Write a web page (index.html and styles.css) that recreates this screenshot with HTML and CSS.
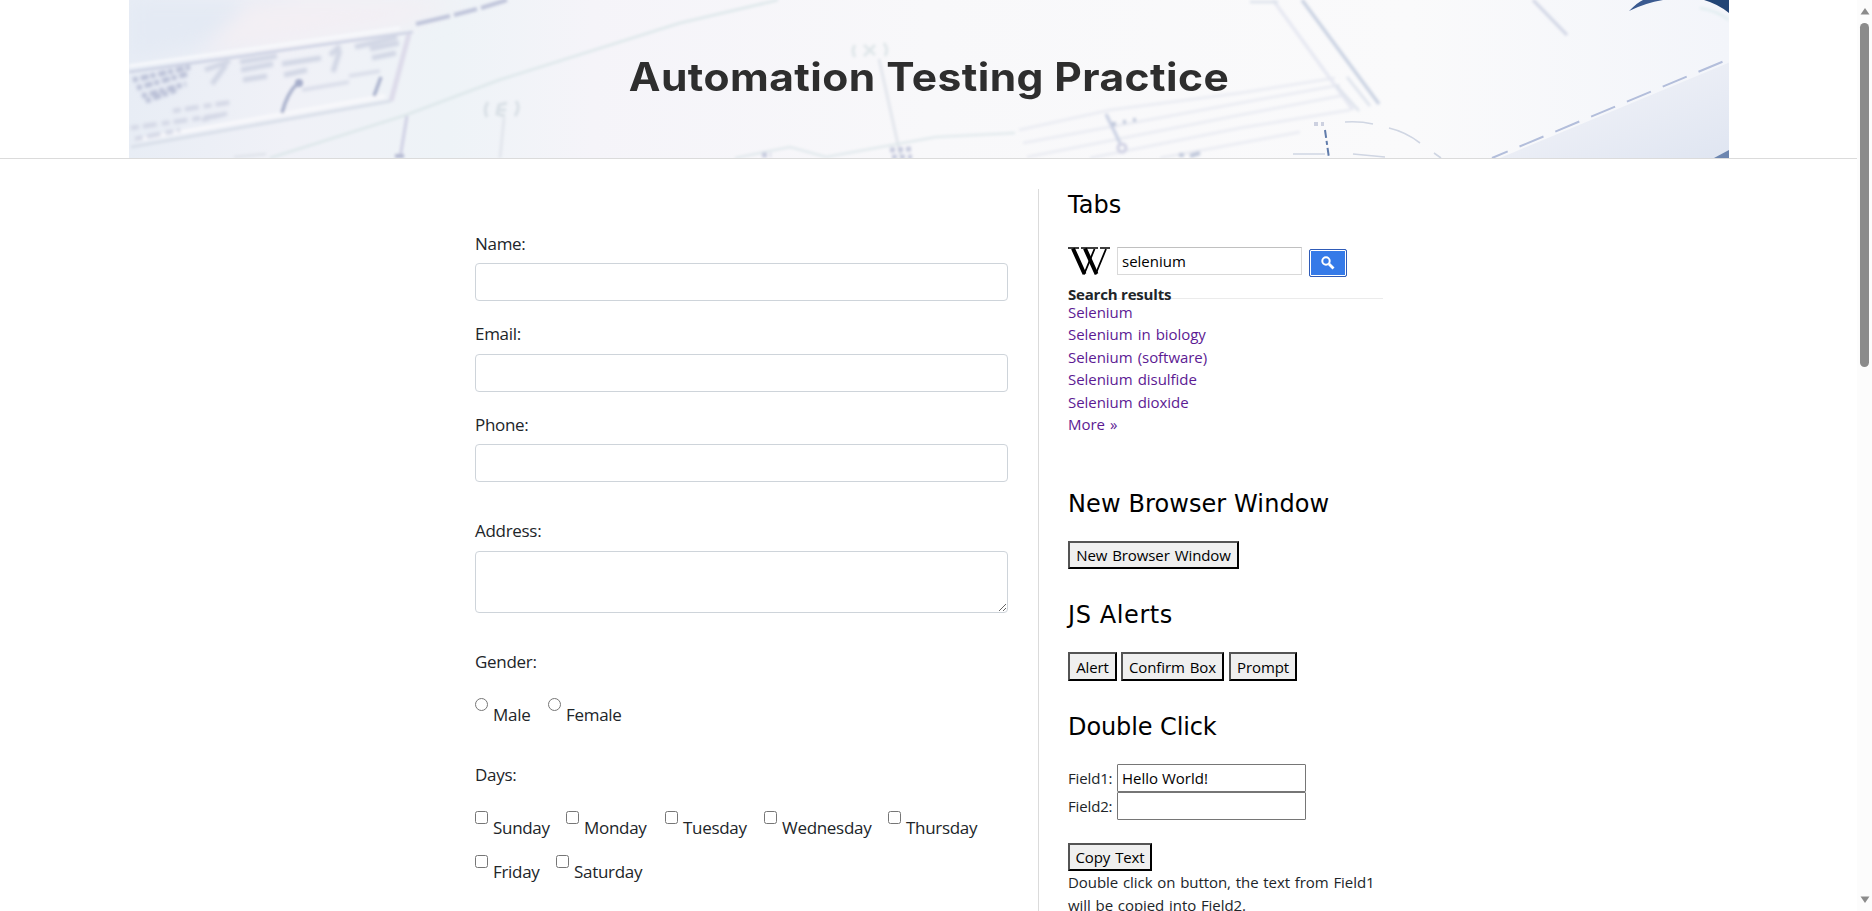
FILE: index.html
```
<!DOCTYPE html>
<html lang="en">
<head>
<meta charset="utf-8">
<title>Automation Testing Practice</title>
<link rel="stylesheet" href="styles.css">
</head>
<body>
<div class="page">
  <header class="header">
    <svg class="blueprint" viewBox="129 0 1600 158" aria-hidden="true">
      <defs>
        <linearGradient id="paper" x1="0" x2="1" y1="0" y2="0">
          <stop offset="0" stop-color="#e8edf5"/><stop offset=".1" stop-color="#f0f1f7"/>
          <stop offset=".2" stop-color="#eef3f7"/><stop offset=".29" stop-color="#f5f4f9"/>
          <stop offset=".5" stop-color="#f8f8fa"/><stop offset=".8" stop-color="#fafafb"/>
          <stop offset="1" stop-color="#f3f5fa"/>
        </linearGradient>
        <linearGradient id="shade" x1="0" x2="1" y1="0" y2="1">
          <stop offset="0" stop-color="#f6f6fa"/><stop offset="1" stop-color="#dfe5f1"/>
        </linearGradient>
        <filter id="soft" x="-5%" y="-20%" width="110%" height="140%"><feGaussianBlur stdDeviation="1.5"/></filter>
        <filter id="smudge" x="-5%" y="-20%" width="110%" height="140%"><feGaussianBlur stdDeviation="1.2"/></filter>
        <filter id="wide" x="-20%" y="-50%" width="140%" height="200%"><feGaussianBlur stdDeviation="10"/></filter>
        <filter id="fine" x="-5%" y="-20%" width="110%" height="140%"><feGaussianBlur stdDeviation=".5"/></filter>
      </defs>
      <rect x="129" width="1600" height="158" fill="url(#paper)"/>
      <path d="M129 0H300L240 40 129 60z" fill="#e4eaf4" filter="url(#wide)"/>
      <path d="M250 0H470L400 26 200 55z" fill="#f3eff4" filter="url(#wide)"/>
      <path d="M1500 158L1735 60V158z" fill="url(#shade)" filter="url(#fine)"/>
      <g filter="url(#soft)" fill="none">
        <path d="M129 72L413 32" stroke="#cbd0e2" stroke-width="2.5"/>
        <path d="M129 66L400 28" stroke="#f8f9fc" stroke-width="3"/>
        <path d="M409 34L391 101" stroke="#dddbea" stroke-width="5"/>
        <path d="M131 147L391 101" stroke="#d9dfe9" stroke-width="3"/>
        <path d="M136 140L385 96" stroke="#f8f8fb" stroke-width="4"/>
        <path d="M270 158L406 115 499 80 680 23 778 0" stroke="#dde7ea" stroke-width="2.5"/>
        <path d="M416 24L450 16M454 15L477 9M481 8L507 0" stroke="#bfc4da" stroke-width="4"/>
        <path d="M407 116L400 158" stroke="#cfd0e4" stroke-width="3"/>
        <path d="M395 156H404" stroke="#b4b9d2" stroke-width="4"/>
        <path d="M298 83Q287 93 282 113M381 77L374 96" stroke="#a9b1cc" stroke-width="3.5"/>
        <circle cx="299" cy="83" r="4" fill="#a5adca"/>
        <g filter="url(#smudge)">
          <path d="M302 90L349 82M349 76L380 71" stroke="#d4d8e6" stroke-width="3"/>
          <path d="M133 80L190 67M137 88L187 74M142 96L186 84M146 101L176 90" stroke="#b9bfd6" stroke-width="5" stroke-dasharray="5 3 8 2"/>
          <path d="M205 70L230 61M212 84L226 65M240 62L277 56M241 70L273 64M243 80L267 76M282 64L321 58M284 75L307 70M330 55L340 46M333 72L340 50M370 49L399 43M372 58L396 53M355 47L397 37" stroke="#d0d5e4" stroke-width="5"/>
          <path d="M173 111L232 102M202 120L232 112M131 128L222 115M135 139L180 130" stroke="#d3d7e5" stroke-width="4.500" stroke-dasharray="8 4 14 5"/>
        </g>
        <path d="M504 118L500 158M234 157L266 154M879 59L901 158" stroke="#dfe3ea" stroke-width="2.5"/>
        <path d="M488 102Q483 109 487 117M516 101Q521 108 515 116M507 103L499 105 497 114 505 116M498 110H506" stroke="#d8dfe5" stroke-width="3"/>
        <path d="M855 45Q851 51 855 57M884 43Q889 50 885 56M864 45L875 55M875 45L864 56" stroke="#dfe6e9" stroke-width="3"/>
        <path d="M735 158L790 147 826 157 936 137 1015 133" stroke="#dde6ea" stroke-width="2"/>
        <path d="M890 150L913 149M892 157H912M762 155H771" stroke="#c6cade" stroke-width="5" stroke-dasharray="5 3"/>
        <path d="M1019 130L1110 110 1240 93 1335 78M1023 143L1240 103 1340 85M1027 157L1240 115 1345 95M1090 158L1240 128 1350 110M1160 158L1300 132" stroke="#e9ebf2" stroke-width="2.5"/>
        <path d="M1106 114L1120 143" stroke="#c8cfe2" stroke-width="3"/>
        <circle cx="1122" cy="148" r="4" stroke="#cfd0e3" stroke-width="3"/>
        <path d="M1112 124H1116M1123 122H1126M1133 120H1136M1179 155H1184M1190 156L1200 153" stroke="#bfc7da" stroke-width="4"/>
        <path d="M1302 0L1379 104" stroke="#c6cfe0" stroke-width="3"/>
        <path d="M1273 0L1353 110" stroke="#e5e7f1" stroke-width="3"/>
        <path d="M1336 85L1359 111M1347 77L1370 106M1250 2H1278" stroke="#dce1eb" stroke-width="2.5"/>
        <path d="M1533 0L1567 35" stroke="#cfd4e4" stroke-width="3"/>
        <path d="M1700 8Q1718 11 1729 20" stroke="#dcebed" stroke-width="2"/>
      </g>
      <g filter="url(#fine)" fill="none">
        <path d="M1492 158L1729 59" stroke="#b3bedb" stroke-width="2" stroke-dasharray="26 12.8" stroke-dashoffset="9"/>
        <path d="M1345 122Q1360 121 1373 124M1389 128Q1406 132 1420 143M1434 153L1441 158M1293 154H1325M1353 154L1385 157" stroke="#d0d6e3" stroke-width="1.6"/>
        <path d="M1325 130L1329 158" stroke="#617cab" stroke-width="2" stroke-dasharray="8 3 4 3"/>
        <path d="M1314 124H1324" stroke="#cdd1e0" stroke-width="4" stroke-dasharray="4 3"/>
        <path d="M1629 11Q1638 2 1643 0H1663Q1645 3 1629 11z" fill="#3a5a90"/>
        <path d="M1704 0H1729V13Q1718 4 1704 0z" fill="#244475"/>
        <path d="M1714 158L1729 150V158z" fill="#6d86b0"/>
      </g>
    </svg>
    <h1 class="title">Automation Testing Practice</h1>
  </header>
  <div class="columns">
    <main class="form">
      <label class="label first">Name:</label><input class="control" type="text">
      <label class="label raised">Email:</label><input class="control" type="text">
      <label class="label phone">Phone:</label><input class="control" type="text">
      <label class="label raised address">Address:</label><textarea class="control area"></textarea>
      <div class="label gender">Gender:</div>
      <div class="choices radios">
        <label class="choice male"><input type="radio" name="g"><span>Male</span></label>
        <label class="choice"><input type="radio" name="g"><span>Female</span></label>
      </div>
      <div class="label days">Days:</div>
      <div class="choices">
        <label class="choice sun"><input type="checkbox"><span>Sunday</span></label>
        <label class="choice mon"><input type="checkbox"><span>Monday</span></label>
        <label class="choice tue"><input type="checkbox"><span>Tuesday</span></label>
        <label class="choice wed"><input type="checkbox"><span>Wednesday</span></label>
        <label class="choice thu"><input type="checkbox"><span>Thursday</span></label>
      </div>
      <div class="choices second">
        <label class="choice fri"><input type="checkbox"><span>Friday</span></label>
        <label class="choice sat"><input type="checkbox"><span>Saturday</span></label>
      </div>
    </main>
    <aside class="side">
      <h2 class="heading">Tabs</h2>
      <div class="search">
        <svg class="wiki" viewBox="0 0 42 29" aria-hidden="true">
          <g fill="none" stroke="#000">
            <path d="M5 1.5L16.5 27M17 1.5L28.500 27" stroke-width="4"/>
            <path d="M16 27.500L26.500 2M27.500 27.500L38 2" stroke-width="1.800"/>
            <path d="M0 1H11M13 1H30M32 1H42" stroke-width="1.600"/>
          </g>
        </svg>
        <input class="query" type="text" value="selenium">
        <button class="go"><svg viewBox="0 0 14 14" aria-hidden="true"><circle cx="5" cy="5" r="3.700" fill="none" stroke="#fff" stroke-width="2"/><path d="M8 8L12.500 12.500" stroke="#fff" stroke-width="2.800"/></svg></button>
      </div>
      <div class="results-title"><span>Search results</span></div>
      <ul class="results">
        <li><a>Selenium</a></li><li><a>Selenium in biology</a></li><li><a>Selenium (software)</a></li>
        <li><a>Selenium disulfide</a></li><li><a>Selenium dioxide</a></li><li><a>More »</a></li>
      </ul>
      <h2 class="heading window">New Browser Window</h2>
      <div class="buttons"><button class="btn b-window">New Browser Window</button></div>
      <h2 class="heading alerts">JS Alerts</h2>
      <div class="buttons"><button class="btn b-alert">Alert</button><button class="btn b-confirm">Confirm Box</button><button class="btn b-prompt">Prompt</button></div>
      <h2 class="heading double">Double Click</h2>
      <div class="field"><span>Field1:</span><input type="text" value="Hello World!"></div>
      <div class="field"><span>Field2:</span><input type="text"></div>
      <button class="btn b-copy">Copy Text</button>
      <p class="note">Double click on button, the text from Field1<br>will be copied into Field2.</p>
    </aside>
  </div>
</div>
<div class="scrollbar">
  <svg viewBox="0 0 10 7" aria-hidden="true"><path d="M5 0L9.500 6.500H.5z" fill="#8b8b8b"/></svg>
  <div class="thumb"></div>
  <svg class="down" viewBox="0 0 10 7" aria-hidden="true"><path d="M5 7L9.500 .5H.5z" fill="#8b8b8b"/></svg>
</div>
</body>
</html>
```
FILE: styles.css
```
* { box-sizing: border-box; }
body {
  margin: 0;
  height: 911px;
  display: flex;
  overflow: hidden;
  background: #fff;
  color: #212529;
  font-family: "Open Sans", "Noto Sans", sans-serif;
}
.page { width: 1857px; height: 911px; overflow: hidden; }
.header {
  height: 159px;
  border-bottom: 1px solid #dbdbdb;
  display: grid;
  justify-content: center;
}
.blueprint { grid-area: 1 / 1; width: 1600px; height: 158px; display: block; }
.title {
  grid-area: 1 / 1;
  margin: 0;
  z-index: 1;
  text-align: center;
  font: bold 39px/154px Inter, sans-serif;
  letter-spacing: .4px;
  transform: scaleX(1.09);
  color: #2e2e2e;
}
.columns { display: flex; padding: 30px 0 0 475px; height: 752px; }
.form { width: 563px; padding-right: 30px; }
.label {
  display: block;
  height: 27px;
  margin-top: 20px;
  line-height: 27px;
  font-size: 17px;
  letter-spacing: -.3px;
}
.label.first { margin-top: 41px; }
.label + .control { margin-top: 6px; }
.label.raised { line-height: 25px; }
.label.phone { margin-top: 19px; }
.label.address { margin-top: 36px; }
.label.gender { margin-top: 35px; }
.label.days { margin-top: 37px; }
.control {
  display: block;
  width: 533px;
  height: 38px;
  margin: 0;
  border: 1px solid #ced4da;
  border-radius: 4px;
  background: #fff;
}
.area { height: 62px; resize: vertical; }
.choices { display: flex; height: 26px; margin-top: 23px; }
.choices.second { margin-top: 18px; }
.choice { display: flex; height: 26px; font-size: 17px; letter-spacing: -.3px; }
.choice input { width: 13px; height: 13px; margin: 0 5px 0 0; flex: none; }
.choice span { line-height: 26px; margin-top: 4px; white-space: nowrap; }
.male { width: 73px; }
.sun { width: 91px; }
.mon { width: 99px; }
.tue { width: 99px; }
.wed { width: 124px; }
.fri { width: 81px; }
.side { width: 346px; padding-left: 29px; border-left: 1px solid #dbdbdb; font-size: 15px; }
.heading {
  height: 30px;
  margin: 0;
  font: 24px/32px "DejaVu Sans", sans-serif;
  color: #000;
}
.search { display: flex; height: 30px; margin-top: 28px; }
.wiki { width: 42px; height: 29px; margin-right: 7px; }
.query {
  width: 185px;
  height: 28px;
  padding: 2px 4px;
  border: 1px solid #d9d9d9;
  border-top-color: #c0c0c0;
  font: 15px "Open Sans", sans-serif;
  color: #000;
}
.go {
  width: 38px;
  height: 28px;
  margin: 2px 0 0 7px;
  padding: 0;
  border: 1px solid #2f5bb7;
  border-radius: 2px;
  background: #357ae8;
  box-shadow: inset 0 0 0 1px #fff;
  display: grid;
  place-items: center;
}
.go svg { width: 14px; height: 14px; }
.results-title { position: relative; height: 22px; margin-top: 6px; font-weight: bold; line-height: 22px; letter-spacing: -.2px; }
.results-title::before {
  content: "";
  position: absolute;
  z-index: -1;
  left: 0;
  top: 15px;
  width: 315px;
  height: 1px;
  background: #ebebeb;
}
.results { margin: -4px 0 0; padding: 0; list-style: none; line-height: 22.4px; color: #5c1a93; letter-spacing: -.05px; word-spacing: 1.3px; }
.window { margin-top: 54px; line-height: 30px; letter-spacing: .1px; }
.alerts { line-height: 30px; letter-spacing: .6px; }
.double { letter-spacing: -.1px; }
.buttons { display: flex; height: 29px; margin: 22px 0 30px; }
.btn {
  height: 28px;
  padding: 0;
  border: 2px outset #000;
  background: #efefef;
  color: #000;
  font: 15px/22px "Open Sans", sans-serif;
  letter-spacing: -.1px;
  word-spacing: 1.2px;
  white-space: nowrap;
}
.b-window { width: 171px; }
.b-alert { width: 49px; height: 29px; }
.b-confirm { width: 103px; height: 29px; margin-left: 4px; }
.b-prompt { width: 68px; height: 29px; margin-left: 5px; }
.field { display: flex; height: 28px; line-height: 28px; letter-spacing: -.15px; }
.heading + .field { margin-top: 23px; }
.field span { width: 49px; }
.field input {
  width: 189px;
  height: 28px;
  padding: 1px 4px;
  border: 1px solid #767676;
  border-radius: 1px;
  color: #000;
  font: 15px "Open Sans", sans-serif;
}
.b-copy { display: block; width: 84px; margin-top: 23px; }
.note { margin: 0; line-height: 22.4px; white-space: nowrap; letter-spacing: -.05px; word-spacing: .9px; }
.scrollbar {
  width: 15px;
  height: 911px;
  padding: 8px 2px 0 3px;
  background: #fcfcfc;
  display: flex;
  flex-direction: column;
}
.scrollbar svg { display: block; width: 10px; height: 7px; }
.thumb { width: 9px; height: 344px; margin-top: 8px; border-radius: 5px; background: #8b8b8b; }
.scrollbar .down { margin-top: auto; margin-bottom: 8px; }
```
